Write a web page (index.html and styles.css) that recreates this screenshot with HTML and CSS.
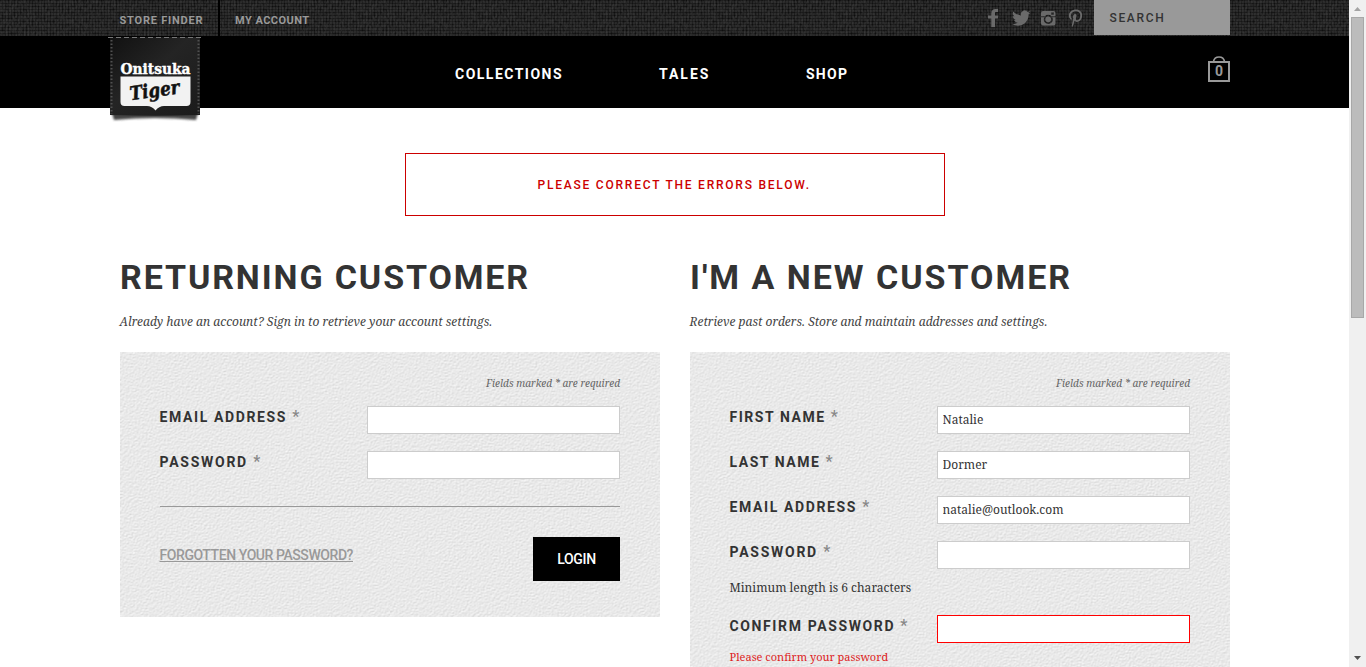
FILE: index.html
```html
<!DOCTYPE html>
<html lang="en">
<head>
<meta charset="utf-8">
<title>Onitsuka Tiger - Login</title>
<link rel="stylesheet" href="styles.css">
</head>
<body>
<div class="page">
  <header class="header">
    <div class="topbar">
      <nav class="util">
        <a class="util-link">STORE FINDER</a>
        <a class="util-link account">MY ACCOUNT</a>
      </nav>
      <div class="tools">
        <svg class="social" width="98" height="20" viewBox="0 0 98 20" fill="#6a6a6a">
          <path d="M3.300 18V9.600H0V6.500h3.300V4.400C3.300 1.600 4.900 0 7.500 0h2.600v3H8.400C7.300 3 7 3.500 7 4.400v2.100h3.300L9.900 9.600H7V18z"/>
          <path transform="translate(24 1)" d="M18.500 2.400c-.7.3-1.400.5-2.100.6.800-.5 1.300-1.200 1.600-2-.7.400-1.500.7-2.400.9A3.800 3.800 0 0 0 9 5.400C5.900 5.200 3.100 3.700 1.300 1.400.3 3.200.9 5.400 2.500 6.500c-.6 0-1.200-.2-1.700-.5 0 1.900 1.300 3.400 3 3.800-.5.1-1.100.2-1.700.1.500 1.500 1.900 2.600 3.500 2.600C4 13.800 2 14.400 0 14.100 7.600 18.600 16.600 13.400 16.600 4.800v-.5c.8-.5 1.400-1.200 1.900-1.900z"/>
          <path fill-rule="evenodd" d="M55 2h10.500a2 2 0 0 1 2 2v10.500a2 2 0 0 1-2 2H55a2 2 0 0 1-2-2V4a2 2 0 0 1 2-2zM63.200 3.400v2.400h2.600V3.400zM53 7.200v1h3.400a4.500 4.500 0 1 0 7.800 0h3.300v-1h-4a4.500 4.500 0 0 0-6.600 0zM60.200 7.400a2.900 2.900 0 1 1 0 5.800 2.900 2.900 0 0 1 0-5.800z"/>
          <path d="M83.500 11C81.700 10.200 80.800 8.500 80.800 6.600 80.800 3 84 .4 87.900.4c3.900 0 6.300 2.500 6.300 5.600 0 3.900-2.100 6.900-5.300 6.900-1.100 0-2-.5-2.400-1.200-.7 2.900-1.100 4.600-2.500 6.600-.4-2.500.6-5.900 1.300-8.900-.8-2 .1-4.500 1.900-4.500 2.300 0 1 3.100.7 4.500-.2 1 .5 1.800 1.500 1.800 1.800 0 2.900-2.400 2.900-4.900 0-2.400-1.700-4.100-4.400-4.100-3.200 0-5.100 2.200-5.100 4.700 0 1 .4 1.900 1 2.500z"/>
        </svg>
        <div class="search">SEARCH</div>
      </div>
      <svg class="logo" width="94" height="88" viewBox="0 0 94 88">
        <defs>
          <linearGradient id="leather" x1="0" y1="0" x2="1" y2="1"><stop offset="0" stop-color="#111"/><stop offset=".45" stop-color="#242424"/><stop offset="1" stop-color="#1b1b1b"/></linearGradient>
          <filter id="soft" x="-20%" y="-100%" width="140%" height="300%"><feGaussianBlur stdDeviation="1.2"/></filter>
        </defs>
        <path d="M4 77h86l-2 7q-41-4-82 0z" fill="#444" filter="url(#soft)"/>
        <path d="M2 1h90v78q-45 1.500-90 0z" fill="url(#leather)"/>
        <path d="M0 1.500h95" stroke="#777" stroke-width="1.200" stroke-dasharray="5 3"/>
        <path d="M3.500 4v74M90.500 4v74" stroke="#505050" stroke-width="2" stroke-dasharray="1.500 2"/>
        <path d="M12.500 40.500h70V66q0 4-4 4H56q-5 0-8.500 4.500Q44 70 39 70H16.500q-4 0-4-4z" fill="#f2f2f2"/>
        <text x="12.500" y="38" textLength="70" lengthAdjust="spacingAndGlyphs" class="logo-name">Onitsuka</text>
        <text x="22" y="61" textLength="50" lengthAdjust="spacingAndGlyphs" class="logo-tiger" transform="rotate(-8 46 58)">Tiger</text>
      </svg>
    </div>
    <div class="mainbar">
      <nav class="nav"><a>COLLECTIONS</a><a class="tales">TALES</a><a class="shop">SHOP</a></nav>
      <div class="bag">
        <svg width="22" height="27" viewBox="0 0 22 27" fill="none" stroke="#999"><path d="M1 6h20v19H1z" stroke-width="2"/><path d="M5.500 5.500C6.500-.5 15.500-.5 16.500 5.500" stroke-width="1.600"/></svg>
        <span class="count">0</span>
      </div>
    </div>
  </header>
  <main class="content">
    <div class="alert">PLEASE CORRECT THE ERRORS BELOW.</div>
    <div class="columns">
      <section>
        <h1>RETURNING CUSTOMER</h1>
        <p class="intro">Already have an account? Sign in to retrieve your account settings.</p>
        <form class="panel login">
          <p class="required">Fields marked * are required</p>
          <div class="row"><label>EMAIL ADDRESS <i>*</i></label><input type="text"></div>
          <div class="row"><label class="pw">PASSWORD <i>*</i></label><input type="password"></div>
          <div class="actions"><a class="forgot">FORGOTTEN YOUR PASSWORD?</a><button type="button">LOGIN</button></div>
        </form>
      </section>
      <section>
        <h1 class="new">I'M A NEW CUSTOMER</h1>
        <p class="intro">Retrieve past orders. Store and maintain addresses and settings.</p>
        <form class="panel">
          <p class="required">Fields marked * are required</p>
          <div class="row"><label class="name">FIRST NAME <i>*</i></label><input type="text" value="Natalie"></div>
          <div class="row"><label class="name">LAST NAME <i>*</i></label><input type="text" value="Dormer"></div>
          <div class="row"><label>EMAIL ADDRESS <i>*</i></label><input type="text" value="natalie@outlook.com"></div>
          <div class="row"><label class="pw">PASSWORD <i>*</i></label><input type="password"></div>
          <p class="hint">Minimum length is 6 characters</p>
          <div class="row"><label>CONFIRM PASSWORD <i>*</i></label><input class="invalid" type="password"></div>
          <p class="error">Please confirm your password</p>
        </form>
      </section>
    </div>
  </main>
</div>
<div class="scrollbar">
  <svg width="17" height="17" viewBox="0 0 17 17"><path d="M5 11h7L8.500 7z" fill="#a3a3a3"/></svg>
  <div class="thumb"></div>
  <svg class="down" width="17" height="17" viewBox="0 0 17 17"><path d="M5 6h7l-3.500 4z" fill="#505050"/></svg>
</div>
</body>
</html>
```
FILE: styles.css
```css
* { box-sizing: border-box; }
body { margin: 0; display: flex; height: 667px; overflow: hidden; background: #fff; color: #333; font: 12px/18px "Noto Serif", serif; }
h1, p { margin: 0; }
.page { width: 1349px; height: 667px; overflow: hidden; }

.topbar, .mainbar, .nav, .util-link, .search, .count, h1, label, .forgot, button, .alert { font-family: Roboto, "Liberation Sans", sans-serif; }

.topbar {
  position: relative; height: 36px; padding: 0 119px 0 110px; display: flex; justify-content: space-between;
  background-color: #1e1e1e;
  background-image:
    url("data:image/svg+xml,%3Csvg xmlns='http://www.w3.org/2000/svg' width='120' height='36'%3E%3Cfilter id='v' x='0' y='0' width='100%25' height='100%25' color-interpolation-filters='sRGB'%3E%3CfeTurbulence type='fractalNoise' baseFrequency='.5 .25' numOctaves='2' seed='9' stitchTiles='stitch'/%3E%3CfeColorMatrix values='0 0 0 0 .3 0 0 0 0 .3 0 0 0 0 .3 .9 0 0 0 -.3'/%3E%3C/filter%3E%3Crect width='120' height='36' filter='url(%23v)'/%3E%3C/svg%3E"),
    repeating-linear-gradient(90deg, transparent 0 2px, rgba(0, 0, 0, .35) 2px 3px),
    repeating-linear-gradient(0deg, #262626 0 2px, #161616 2px 3px);
}
.util { display: flex; }
.util-link { width: 110px; padding: 12px 0 0 9.500px; border-right: 2px solid #000; font-weight: 700; font-size: 11px; line-height: 18px; letter-spacing: .79px; color: #999; white-space: nowrap; }
.util-link.account { border: 0; padding-left: 15px; letter-spacing: .46px; }
.tools { display: flex; }
.social { margin: 9px 8px 0 0; }
.search { width: 136px; height: 35px; padding: 9px 0 0 15.500px; background: #999; color: #333; font-weight: 500; font-size: 12px; letter-spacing: 1.650px; }
.logo { position: absolute; left: 108px; top: 36px; }
.logo-name { font: 700 15px "DejaVu Serif", serif; fill: #fff; stroke: #fff; stroke-width: .4; }
.logo-tiger { font: italic 700 19px "DejaVu Serif", serif; fill: #111; stroke: #111; stroke-width: .5; }

.mainbar { height: 72px; padding: 20px 119px 0 455px; display: flex; justify-content: space-between; background: #000; }
.nav { display: flex; padding-top: 9px; font-weight: 700; font-size: 14px; line-height: 18px; letter-spacing: 1.480px; color: #fff; }
.nav .tales { margin-left: 96px; letter-spacing: 2px; }
.nav .shop { margin-left: 95.500px; letter-spacing: 1.300px; }
.bag { position: relative; width: 22px; }
.count { position: absolute; left: 0; top: 6px; width: 22px; text-align: center; font-weight: 700; font-size: 14px; line-height: 18px; color: #999; }

.content { padding: 45px 119px 0 120px; }
.alert { width: 540px; height: 63px; margin: 0 auto 40px; padding-right: 1.500px; border: 1px solid #c00; color: #c00; font-weight: 500; font-size: 12px; line-height: 62px; letter-spacing: 1.770px; text-align: center; }
.columns { display: grid; grid-template-columns: 540px 540px; gap: 30px; }
h1 { font-weight: 700; font-size: 34px; line-height: 42px; letter-spacing: 1.870px; color: #333; white-space: nowrap; }
h1.new { letter-spacing: 1.970px; }
.intro { margin: 15px 0 21px -.5px; font-style: italic; letter-spacing: .012px; color: #444; }
.panel {
  min-height: 340px; padding: 22px 40px 0; background-color: #e6e6e6;
  background-image: url("data:image/svg+xml,%3Csvg xmlns='http://www.w3.org/2000/svg' width='270' height='200'%3E%3Cfilter id='p' x='0' y='0' width='100%25' height='100%25' color-interpolation-filters='sRGB'%3E%3CfeTurbulence type='fractalNoise' baseFrequency='.55 .65' numOctaves='2' seed='7' stitchTiles='stitch' result='n'/%3E%3CfeDiffuseLighting in='n' surfaceScale='.27' diffuseConstant='1.055' lighting-color='%23fff'%3E%3CfeDistantLight azimuth='240' elevation='60'/%3E%3C/feDiffuseLighting%3E%3C/filter%3E%3Crect width='270' height='200' filter='url(%23p)'/%3E%3C/svg%3E");
}
.panel.login { min-height: 0; height: 265px; }
.required { height: 32px; text-align: right; font-style: italic; font-size: 10px; letter-spacing: .04px; color: #666; }
.row { display: flex; justify-content: space-between; height: 28px; margin-bottom: 17px; }
label { margin-left: -.5px; padding-top: 2px; font-weight: 700; font-size: 14px; line-height: 18px; letter-spacing: 1.620px; color: #333; white-space: pre; }
label.pw { letter-spacing: 1.740px; }
label.name { letter-spacing: 1.540px; }
label i { font-style: normal; font-weight: 500; font-size: 16px; line-height: 14px; color: #888; letter-spacing: 0; }
input { width: 253px; height: 28px; padding: 0 4.500px 1px; border: 1px solid #ccc; background: #fff; color: #333; font: 12px "Noto Serif", serif; }
input.invalid { border-color: #f00; }
.actions { display: flex; justify-content: space-between; margin-top: 27px; padding-top: 30px; border-top: 1px solid #999; }
.forgot { margin-left: -.5px; padding-top: 9px; height: 30px; font-weight: 500; font-size: 14px; line-height: 18px; letter-spacing: -.43px; text-decoration: underline; color: #999; }
button { width: 87px; height: 44px; padding: 0; border: 0; background: #000; color: #fff; font-weight: 500; font-size: 14px; letter-spacing: -.3px; }
.hint { margin: -7px 0 18px -.5px; }
.error { margin: -12px 0 0 -.5px; font-size: 11px; color: #d22; }

.scrollbar { width: 17px; height: 667px; display: flex; flex-direction: column; background: #f0f0f0; }
.thumb { width: 13px; height: 301px; margin-left: 2px; background: #bcbcbc; border: 1px solid #a8a8a8; }
.down { margin-top: auto; }
```
